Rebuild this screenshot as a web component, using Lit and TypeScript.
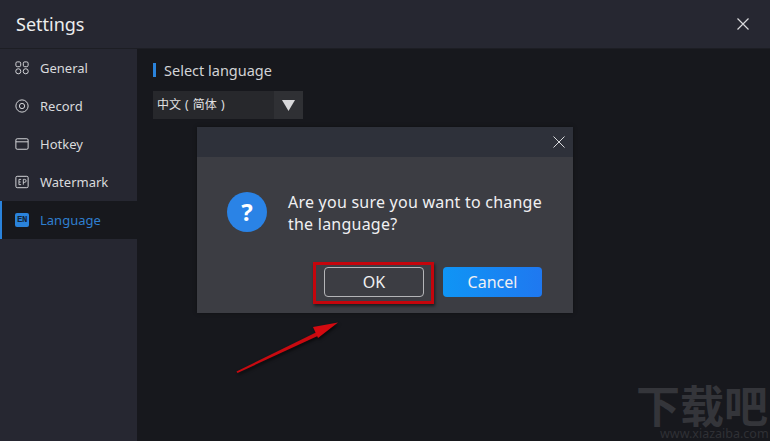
import { LitElement, html, css, svg } from "lit";
import { customElement } from "lit/decorators.js";

const navItems = [
  {
    label: "General",
    icon: svg`<rect x="1" y="1" width="5.5" height="5.5" rx="1.6"/><rect x="9.5" y="1" width="5.5" height="5.5" rx="1.6"/><circle cx="3.75" cy="11.75" r="2.9"/><circle cx="12.25" cy="11.75" r="2.9"/>`,
  },
  {
    label: "Record",
    icon: svg`<circle cx="8" cy="8" r="7"/><circle cx="8" cy="8" r="3"/>`,
  },
  {
    label: "Hotkey",
    icon: svg`<rect x="1" y="2" width="14" height="12" rx="1.5"/><path d="M1 5.5h14"/>`,
  },
  {
    label: "Watermark",
    icon: svg`<rect x="1" y="1.5" width="14" height="13" rx="1.5"/><path d="M7 5H4.5v6H7M4.5 8H6.5M9.5 11V5h1.5a1.6 1.6 0 0 1 0 3.4H9.5" stroke-width="1"/>`,
  },
];

@customElement("app-root")
export class AppRoot extends LitElement {
  static styles = css`
    :host {
      display: block;
      width: 770px;
      height: 441px;
      overflow: hidden;
      position: relative;
      background: #17181d;
      color: #e4e5e8;
      font-family: "Noto Sans", "Noto Sans CJK SC", sans-serif;
    }
    .titlebar {
      height: 49px;
      box-sizing: border-box;
      border-bottom: 1px solid #1d1e24;
      background: #262731;
      display: flex;
      align-items: center;
      justify-content: space-between;
      padding: 0 21px 0 16px;
      font-size: 18px;
      color: #eceded;
    }
    .titlebar svg {
      display: block;
    }
    .body {
      display: flex;
      height: 392px;
    }
    .sidebar {
      width: 137px;
      flex: none;
      background: #262731;
    }
    .nav-item {
      height: 38px;
      box-sizing: border-box;
      display: flex;
      align-items: center;
      gap: 11px;
      padding-left: 15px;
      font-size: 13px;
      color: #d9dadd;
    }
    .nav-item svg {
      fill: none;
      stroke: #d9dadd;
      stroke-width: 1.1;
      flex: none;
    }
    .nav-item.active {
      background: #17181d;
      border-left: 2px solid #2a83dc;
      padding-left: 13px;
      color: #2f7fd0;
    }
    .en-badge {
      width: 14px;
      height: 14px;
      border-radius: 2px;
      background: #2a83dc;
      color: #12233a;
      font-family: "Liberation Mono", monospace;
      font-size: 9px;
      font-weight: 700;
      letter-spacing: -0.5px;
      display: flex;
      align-items: center;
      justify-content: center;
      flex: none;
    }
    .content {
      flex: 1;
      padding: 12px 16px;
    }
    .section-title {
      display: flex;
      align-items: center;
      gap: 8px;
      font-size: 14.5px;
      line-height: 18px;
      color: #d2d3d6;
    }
    .section-title::before {
      content: "";
      flex: none;
      width: 3px;
      height: 14px;
      background: #2a83dc;
    }
    .select {
      margin-top: 12px;
      width: 150px;
      height: 28px;
      background: #27282c;
      display: flex;
      font-size: 12px;
      color: #e0e0e2;
    }
    .select-value {
      flex: 1;
      padding-left: 4px;
      line-height: 28px;
      word-spacing: 1px;
      white-space: pre;
    }
    .select-arrow {
      width: 29px;
      background: #2f3034;
      display: flex;
      align-items: center;
      justify-content: center;
    }
    .dialog {
      position: absolute;
      left: 197px;
      top: 127px;
      width: 376px;
      height: 186px;
      background: #3c3d43;
      box-shadow: 0 0 4px rgba(0, 0, 0, 0.35);
      display: flex;
      flex-direction: column;
    }
    .dialog-head {
      height: 30px;
      flex: none;
      background: #2e313a;
      display: flex;
      align-items: center;
      justify-content: flex-end;
      padding-right: 8px;
    }
    .dialog-main {
      display: flex;
      align-items: flex-start;
      gap: 21px;
      padding: 33px 16px 0 30px;
    }
    .question {
      width: 40px;
      height: 40px;
      margin-top: 2px;
      flex: none;
      border-radius: 50%;
      background: #2a83e6;
      color: #fff;
      font-size: 24px;
      font-weight: 700;
      line-height: 40px;
      text-align: center;
    }
    .message {
      margin-top: 1px;
      font-size: 16px;
      letter-spacing: 0.23px;
      line-height: 22px;
      color: #f0f0f2;
    }
    .dialog-actions {
      display: flex;
      justify-content: flex-end;
      gap: 19px;
      padding: 0 31px;
      margin-top: 32px;
    }
    .btn {
      height: 30px;
      box-sizing: border-box;
      border-radius: 4px;
      font-family: inherit;
      font-size: 16px;
      padding: 0;
      color: #f0f0f2;
    }
    .btn.outline {
      width: 100px;
      background: transparent;
      border: 1px solid #b4b5b8;
    }
    .btn.primary {
      width: 99px;
      border: none;
      background: linear-gradient(90deg, #0f95f5, #1f78f0);
    }
    .highlight {
      position: absolute;
      left: 313px;
      top: 262px;
      width: 121px;
      height: 42px;
      box-sizing: border-box;
      border: 3px solid #c4050c;
      box-shadow: 1px 2px 3px rgba(0, 0, 0, 0.55);
    }
    .arrow {
      position: absolute;
      left: 230px;
      top: 315px;
      filter: drop-shadow(1px 2px 1.5px rgba(0, 0, 0, 0.6));
    }
    .watermark {
      position: absolute;
      left: 636px;
      top: 382px;
      width: 134px;
      color: #34353a;
    }
    .watermark-logo {
      font-family: "Noto Sans CJK SC", sans-serif;
      font-size: 44px;
      font-weight: 700;
      line-height: 44px;
      white-space: nowrap;
    }
    .watermark-url {
      font-size: 12.5px;
      line-height: 14px;
      margin-top: 1px;
      padding-left: 24px;
      white-space: nowrap;
      color: #2f3035;
    }
  `;

  render() {
    return html`
      <div class="titlebar">
        <span>Settings</span>
        <svg width="12" height="12" viewBox="0 0 12 12" fill="none" stroke="#d8d9dc" stroke-width="1.2">
          <path d="M.5.5l11 11M11.5.5l-11 11" />
        </svg>
      </div>
      <div class="body">
        <nav class="sidebar">
          ${navItems.map(
            (item) => html`
              <div class="nav-item">
                <svg width="14" height="14" viewBox="0 0 16 16">${item.icon}</svg>
                <span>${item.label}</span>
              </div>
            `
          )}
          <div class="nav-item active">
            <span class="en-badge">EN</span>
            <span>Language</span>
          </div>
        </nav>
        <main class="content">
          <div class="section-title">Select language</div>
          <div class="select">
            <span class="select-value">中文 ( 简体 )</span>
            <span class="select-arrow">
              <svg width="13" height="11" viewBox="0 0 13 11"><path d="M0 0h13L6.5 11z" fill="#d8d8da" /></svg>
            </span>
          </div>
        </main>
      </div>

      <div class="dialog">
        <div class="dialog-head">
          <svg width="12" height="12" viewBox="0 0 12 12" fill="none" stroke="#d8d9dc" stroke-width="1">
            <path d="M.5.5l11 11M11.5.5l-11 11" />
          </svg>
        </div>
        <div class="dialog-main">
          <div class="question">?</div>
          <div class="message">Are you sure you want to change the language?</div>
        </div>
        <div class="dialog-actions">
          <button class="btn outline">OK</button>
          <button class="btn primary">Cancel</button>
        </div>
      </div>

      <div class="highlight"></div>
      <svg class="arrow" width="115" height="62" viewBox="0 0 115 62">
        <path d="M6.5 56.5L90 15.5L92 19L7.5 58z" fill="#c80a10" />
        <path d="M108 7.5L83 12L88 23z" fill="#d40a10" />
      </svg>

      <div class="watermark">
        <div class="watermark-logo">下载吧</div>
        <div class="watermark-url">www.xiazaiba.com</div>
      </div>
    `;
  }
}
